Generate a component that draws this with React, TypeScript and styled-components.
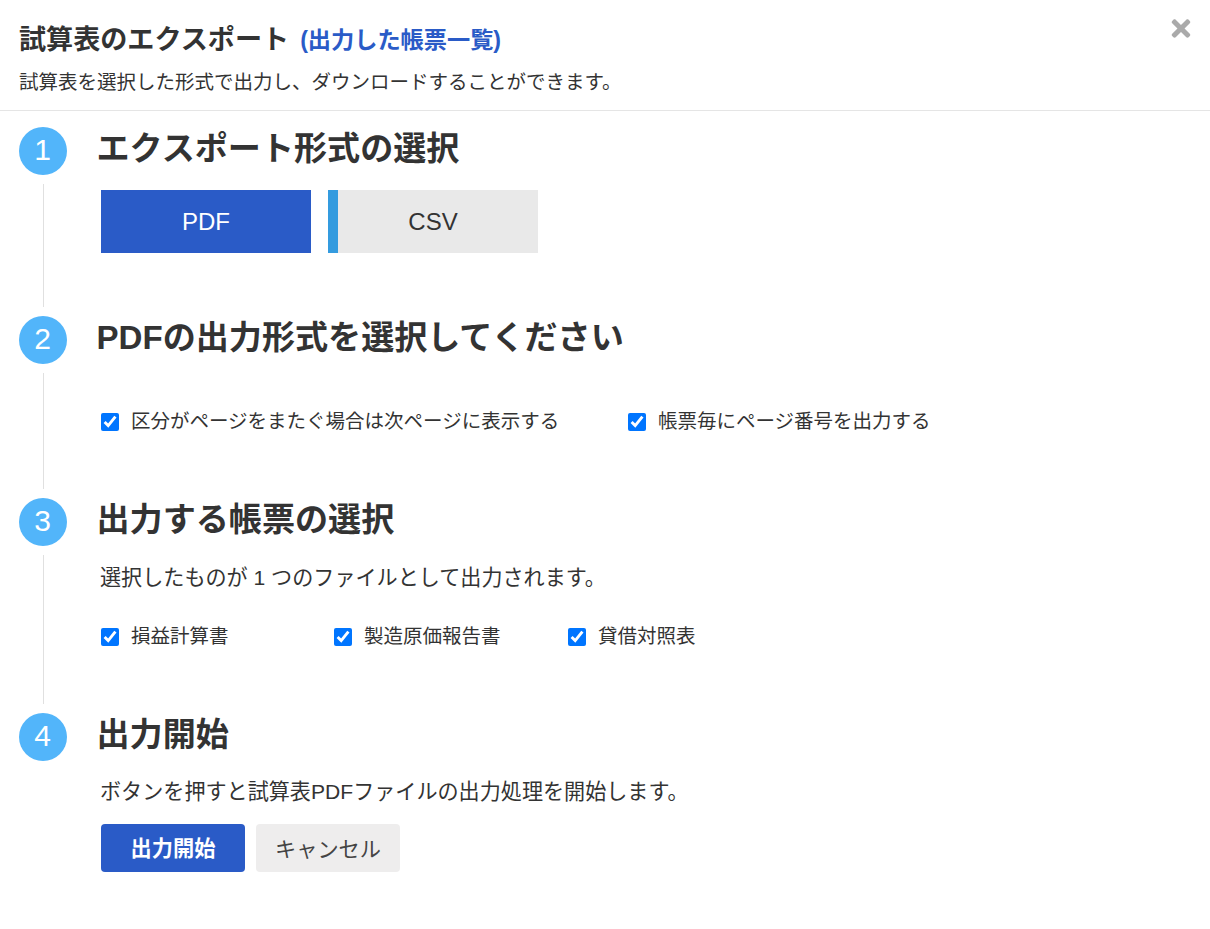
import React from "react";
import styled, { createGlobalStyle } from "styled-components";
import { FaTimes } from "react-icons/fa";

const Global = createGlobalStyle`
  html, body { margin: 0; padding: 0; background: #fff; }
  body { font-family: "Liberation Sans", "Noto Sans CJK JP", sans-serif; color: #333; }
  * { box-sizing: border-box; }
`;

const Page = styled.div`
  width: 1210px;
  height: 929px;
  overflow: hidden;
  position: relative;
`;

const Header = styled.header`
  height: 111px;
  padding: 20px 19px 0;
  border-bottom: 1px solid #e5e5e5;
`;

const Title = styled.h1`
  margin: 0;
  font-size: 27.1px;
  line-height: 40px;
  font-weight: 700;
  color: #333;
  display: flex;
  align-items: center;
`;

const TitleLink = styled.a`
  font-size: 23.2px;
  color: #2a5bc7;
  margin-left: 11px;
  text-decoration: none;
`;

const Subtitle = styled.p`
  margin: 6px 0 0;
  font-size: 19.5px;
  line-height: 32px;
  color: #333;
`;

const Close = styled.button`
  position: absolute;
  top: 14px;
  right: 16px;
  width: 26px;
  height: 28px;
  padding: 0;
  border: 0;
  background: none;
  color: #aaa;
  display: flex;
  align-items: center;
  justify-content: center;
  font-size: 27px;
`;

const Steps = styled.div`
  padding: 16px 19px 0;
`;

const Step = styled.section<{ $height: number }>`
  display: flex;
  height: ${(p) => p.$height}px;
`;

const Rail = styled.div`
  width: 48px;
  flex: none;
  display: flex;
  flex-direction: column;
  align-items: center;
`;

const Circle = styled.div`
  width: 48px;
  height: 48px;
  flex: none;
  border-radius: 50%;
  background: #52b5fa;
  color: #fff;
  font-size: 30px;
  padding: 0 1px 2px 0;
  display: flex;
  align-items: center;
  justify-content: center;
`;

const Line = styled.div`
  width: 1px;
  flex: 1;
  margin: 9px 0 9px;
  background: #e0e0e0;
`;

const Body = styled.div`
  flex: 1;
  margin-left: 30px;
`;

const Heading = styled.h2`
  margin: 0 0 0 -0.5px;
  font-size: 33.1px;
  line-height: 44px;
  font-weight: 700;
  color: #333;
`;

const Formats = styled.div`
  display: flex;
  gap: 17px;
  margin: 19px 0 0 4px;
`;

const FormatButton = styled.div<{ $active?: boolean }>`
  width: 210px;
  height: 63px;
  display: flex;
  align-items: center;
  justify-content: center;
  font-size: 24px;
  background: ${(p) => (p.$active ? "#2a5bc7" : "#e9e9e9")};
  color: ${(p) => (p.$active ? "#fff" : "#333")};
  box-shadow: ${(p) => (p.$active ? "none" : "inset 10px 0 0 #349bdf")};
`;

const Checks = styled.div<{ $mt: number }>`
  display: flex;
  margin: ${(p) => p.$mt}px 0 0 4px;
`;

const CheckLabel = styled.label<{ $width: number }>`
  width: ${(p) => p.$width}px;
  display: flex;
  align-items: center;
  font-size: 19.5px;
  line-height: 28px;
  color: #333;
`;

const CheckInput = styled.input`
  width: 18px;
  height: 18px;
  margin: 2px 12px 0 0;
  flex: none;
  accent-color: #0075ff;
`;

const Note = styled.p<{ $mt: number }>`
  margin: ${(p) => p.$mt}px 0 0 3px;
  font-size: 21.1px;
  line-height: 30px;
  color: #333;
`;

const Actions = styled.div`
  display: flex;
  gap: 11px;
  margin: 17px 0 0 4px;
`;

const ActionButton = styled.button<{ $primary?: boolean }>`
  width: 144px;
  height: 48px;
  border: 0;
  padding: 0 0 ${(p) => (p.$primary ? "3px" : "2px")};
  border-radius: 4px;
  font-family: inherit;
  font-size: 21.2px;
  font-weight: ${(p) => (p.$primary ? 700 : 400)};
  background: ${(p) => (p.$primary ? "#2a5bc7" : "#eeeded")};
  color: ${(p) => (p.$primary ? "#fff" : "#444")};
`;

function Check({ label, width }: { label: string; width: number }) {
  return (
    <CheckLabel $width={width}>
      <CheckInput type="checkbox" defaultChecked />
      {label}
    </CheckLabel>
  );
}

export default function App() {
  return (
    <Page>
      <Global />
      <Header>
        <Title>
          試算表のエクスポート
          <TitleLink>(出力した帳票一覧)</TitleLink>
        </Title>
        <Subtitle>試算表を選択した形式で出力し、ダウンロードすることができます。</Subtitle>
      </Header>
      <Close aria-label="閉じる">
        <FaTimes />
      </Close>
      <Steps>
        <Step $height={189}>
          <Rail>
            <Circle>1</Circle>
            <Line />
          </Rail>
          <Body>
            <Heading>エクスポート形式の選択</Heading>
            <Formats>
              <FormatButton $active>PDF</FormatButton>
              <FormatButton>CSV</FormatButton>
            </Formats>
          </Body>
        </Step>
        <Step $height={182}>
          <Rail>
            <Circle>2</Circle>
            <Line />
          </Rail>
          <Body>
            <Heading>PDFの出力形式を選択してください</Heading>
            <Checks $mt={47}>
              <Check label="区分がページをまたぐ場合は次ページに表示する" width={527} />
              <Check label="帳票毎にページ番号を出力する" width={320} />
            </Checks>
          </Body>
        </Step>
        <Step $height={215}>
          <Rail>
            <Circle>3</Circle>
            <Line />
          </Rail>
          <Body>
            <Heading>出力する帳票の選択</Heading>
            <Note $mt={21}>選択したものが 1 つのファイルとして出力されます。</Note>
            <Checks $mt={29}>
              <Check label="損益計算書" width={233} />
              <Check label="製造原価報告書" width={234} />
              <Check label="貸借対照表" width={200} />
            </Checks>
          </Body>
        </Step>
        <Step $height={180}>
          <Rail>
            <Circle>4</Circle>
          </Rail>
          <Body>
            <Heading>出力開始</Heading>
            <Note $mt={20}>ボタンを押すと試算表PDFファイルの出力処理を開始します。</Note>
            <Actions>
              <ActionButton $primary>出力開始</ActionButton>
              <ActionButton>キャンセル</ActionButton>
            </Actions>
          </Body>
        </Step>
      </Steps>
    </Page>
  );
}
